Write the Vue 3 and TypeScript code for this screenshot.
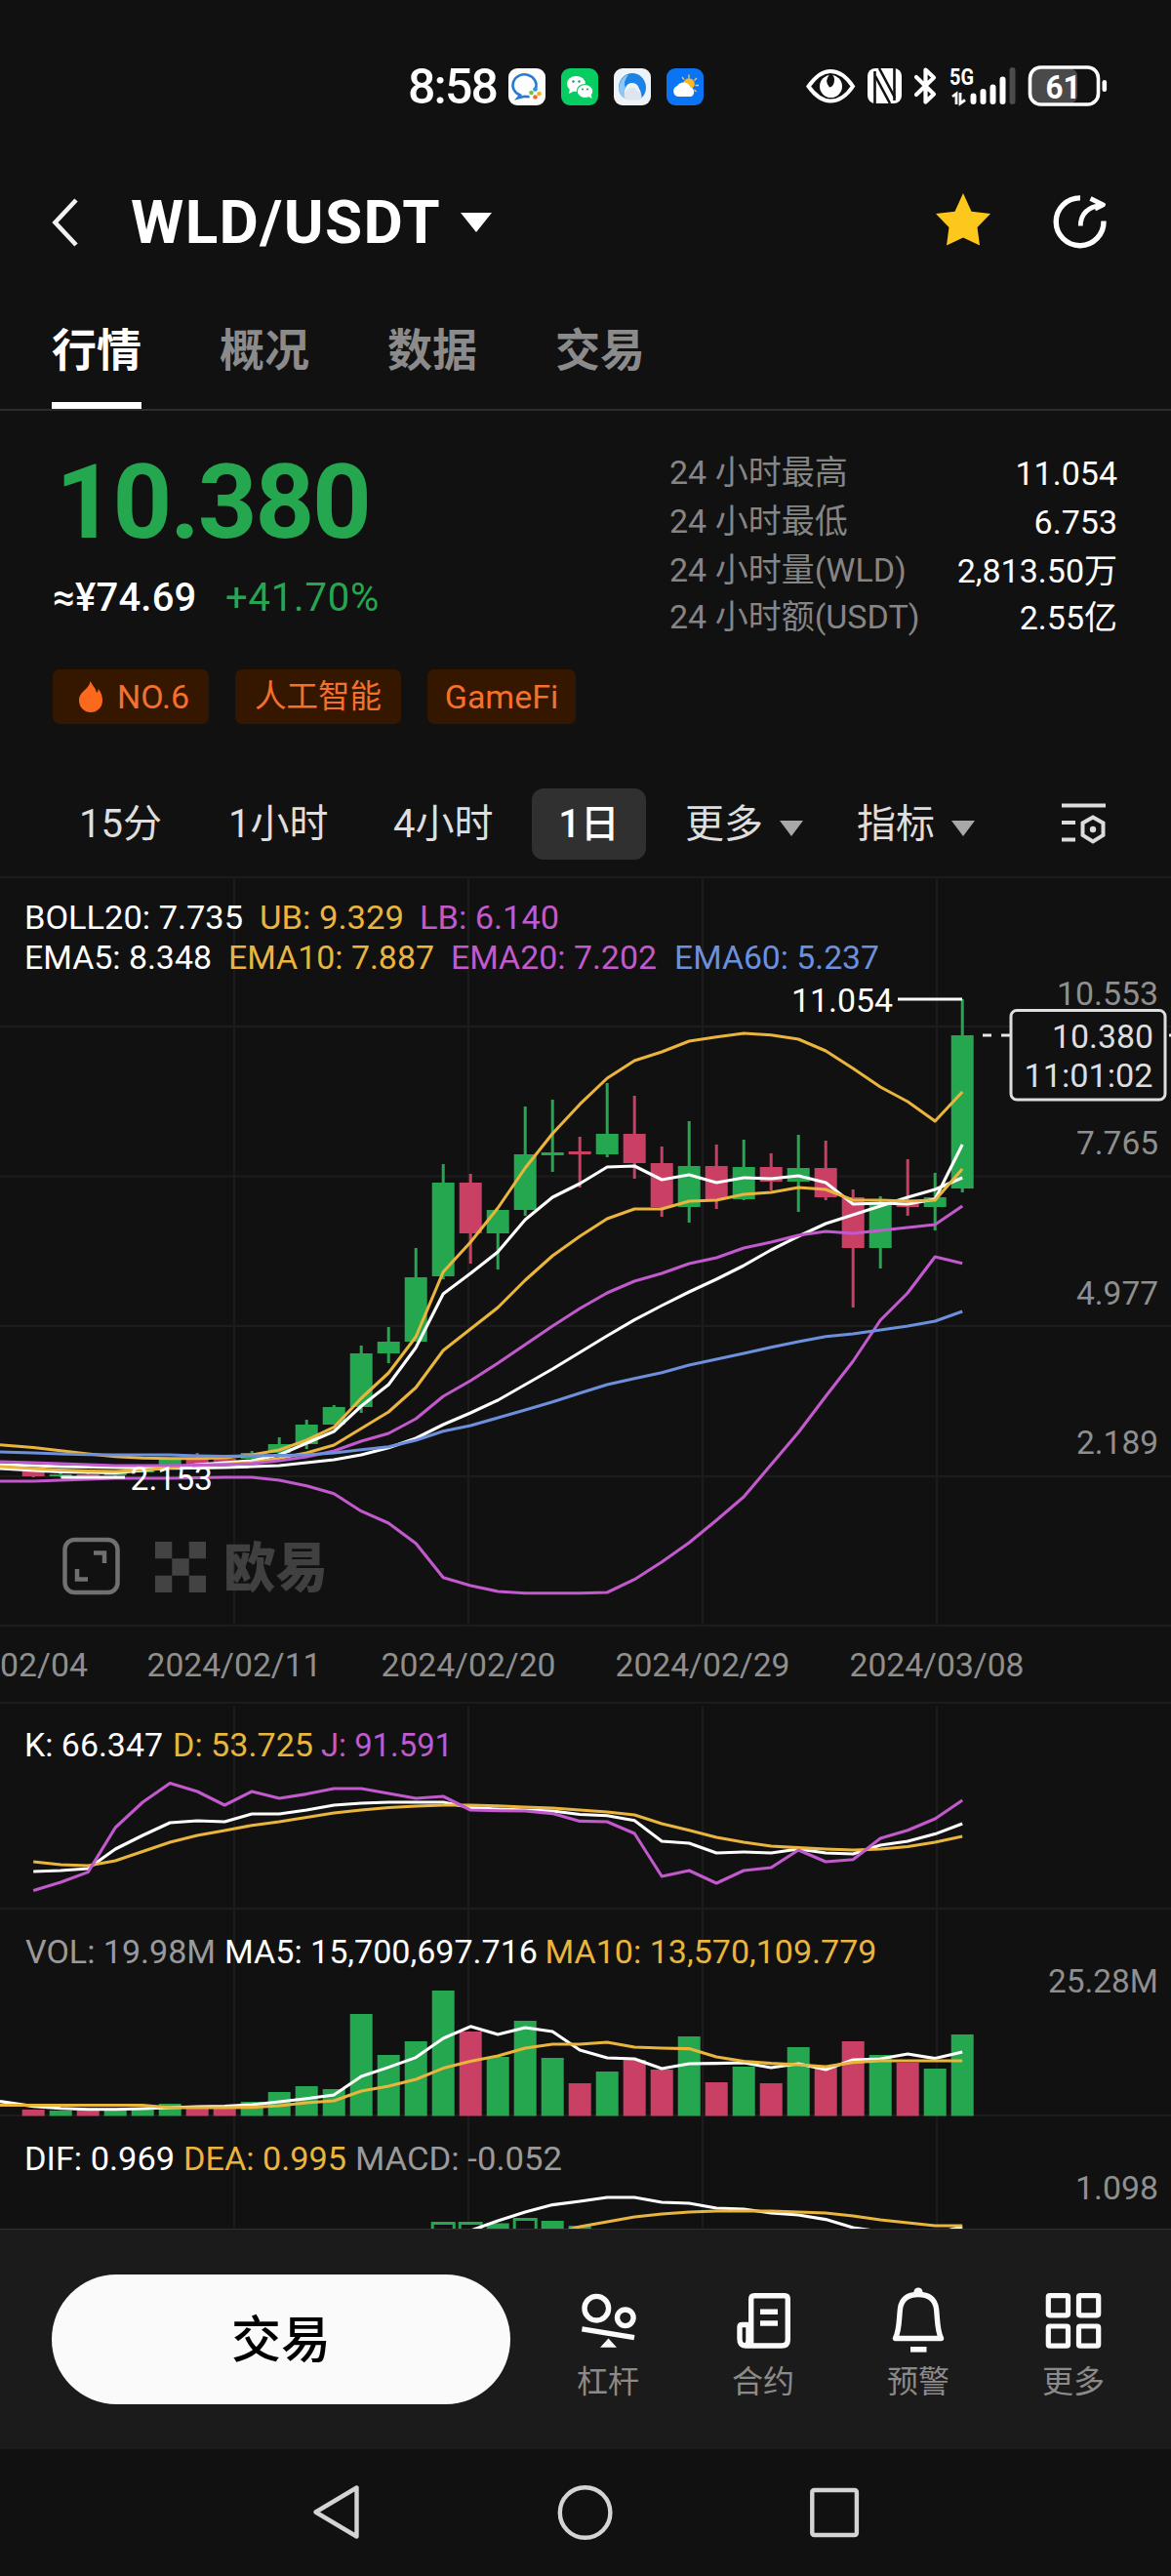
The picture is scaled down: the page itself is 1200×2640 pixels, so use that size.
<script setup lang="ts">
type Candle = [color: 'g' | 'r', high: number, top: number, bottom: number, low: number]
interface Label { t: string; x: number; y: number; w: number; c: string }

const GREEN = '#25a750'
const RED = '#ca3f64'
const YELLOW = '#e9b53d'
const PURPLE = '#c259cd'
const BLUE = '#6d90dc'
const WHITE = '#ffffff'
const GREY = '#8f8f8f'

const X0 = 34.2
const STEP = 28
const xAt = (i: number) => X0 + STEP * i

/** Polyline points for a series whose first value belongs to slot `start`. */
const line = (ys: number[], start = -1) =>
  ys.map((y, k) => `${start + k < 0 ? 0 : xAt(start + k).toFixed(1)},${y}`).join(' ')

const candles: Candle[] = [
  ['r', 1507, 1508, 1513, 1514], ['g', 1510, 1511, 1513, 1514], ['r', 1510, 1511, 1513, 1513],
  ['g', 1507, 1508, 1512, 1513], ['g', 1503, 1504, 1509, 1509], ['g', 1495, 1496, 1504, 1504],
  ['r', 1489, 1496, 1500, 1502], ['r', 1491, 1495, 1498, 1500], ['g', 1487, 1489, 1495, 1496],
  ['g', 1473, 1480, 1489, 1490], ['g', 1455, 1460, 1480, 1485], ['g', 1440, 1442, 1460, 1460],
  ['g', 1379, 1387, 1442, 1448], ['g', 1360, 1375, 1387, 1397], ['g', 1279, 1309, 1375, 1375],
  ['g', 1193, 1212, 1308, 1311], ['r', 1203, 1212, 1264, 1295], ['g', 1240, 1240, 1264, 1301],
  ['g', 1134, 1183, 1240, 1246], ['g', 1127, 1181, 1184, 1201], ['r', 1165, 1180, 1183, 1217],
  ['g', 1110, 1162, 1183, 1186], ['r', 1123, 1162, 1192, 1208], ['r', 1175, 1192, 1237, 1247],
  ['g', 1149, 1195, 1237, 1253], ['r', 1173, 1195, 1229, 1239], ['g', 1168, 1196, 1229, 1230],
  ['r', 1182, 1196, 1211, 1220], ['g', 1163, 1197, 1211, 1242], ['r', 1169, 1197, 1227, 1230],
  ['r', 1219, 1227, 1279, 1340], ['g', 1226, 1234, 1279, 1300], ['r', 1188, 1234, 1237, 1246],
  ['g', 1202, 1227, 1237, 1261], ['g', 1024, 1061, 1218, 1222],
]

const mainLines = [
  { c: WHITE, p: line([1501, 1502, 1503, 1503.5, 1504, 1504.5, 1504.7, 1504.5, 1504, 1503, 1502, 1499, 1496, 1491, 1483.7, 1474, 1460, 1448, 1435, 1419, 1403, 1386, 1369, 1352.7, 1338, 1324, 1311, 1297, 1281, 1267, 1254, 1245, 1236, 1227, 1219, 1207]) },
  { c: YELLOW, p: line([1480.7, 1483.5, 1486.7, 1490, 1492.7, 1494.3, 1494.7, 1494.7, 1494, 1491, 1486, 1476, 1462.7, 1433, 1407, 1370, 1303.5, 1273, 1238, 1197, 1161.7, 1131.7, 1105, 1087, 1078, 1067, 1062.7, 1059, 1060.7, 1065, 1077, 1095, 1114, 1129, 1149, 1119]) },
  { c: PURPLE, p: line([1518, 1518, 1517, 1516, 1515, 1515, 1515, 1514.5, 1514, 1514, 1517, 1522.7, 1530.7, 1548.7, 1561, 1581.7, 1616.7, 1625, 1631, 1632.7, 1632.7, 1632.7, 1632, 1618.7, 1600.7, 1581, 1558, 1534, 1501, 1468, 1431, 1395, 1353, 1325, 1288, 1294.7]) },
  { c: WHITE, p: line([1505, 1507, 1508.5, 1509, 1509.5, 1507, 1504, 1501, 1499, 1497, 1491, 1479, 1467, 1441, 1419, 1381, 1326, 1305, 1283, 1250, 1227, 1213, 1196, 1195, 1209, 1204, 1212, 1207, 1208, 1205, 1212, 1234, 1233, 1234, 1229, 1173]) },
  { c: YELLOW, p: line([1503, 1505, 1506.5, 1507.5, 1508, 1506.5, 1504.5, 1502, 1500.5, 1499, 1494.5, 1489, 1481, 1464, 1447, 1422, 1384, 1362, 1340, 1312, 1287, 1267, 1249, 1239, 1239, 1231, 1230, 1224, 1222, 1217, 1219, 1230, 1230, 1231, 1230, 1198]) },
  { c: PURPLE, p: line([1498, 1499, 1500, 1501, 1502, 1502, 1502, 1501.5, 1501, 1500, 1497, 1493, 1487, 1477, 1469, 1454, 1431, 1415, 1397, 1378, 1359, 1341, 1325, 1313, 1305, 1295, 1289, 1279, 1273, 1266, 1262, 1264, 1261, 1258, 1255, 1236]) },
  { c: BLUE, p: line([1488, 1489, 1490, 1490.7, 1491, 1491, 1491, 1492, 1492.5, 1492, 1491.5, 1491, 1489, 1485.7, 1482.7, 1476, 1466.7, 1461, 1453, 1445, 1436.7, 1427.7, 1419, 1412.7, 1406.7, 1399, 1393, 1387, 1380.7, 1375, 1369.7, 1367, 1363, 1359, 1354, 1344]) },
]

const kdjLines = [
  { c: WHITE, p: line([1918, 1917, 1915, 1895, 1881, 1868, 1866, 1867, 1859, 1859, 1855, 1850, 1848, 1847, 1847, 1847, 1852.5, 1854, 1855, 1856, 1859.5, 1860.7, 1865.7, 1887, 1889, 1899, 1898, 1899, 1895, 1899, 1900, 1891, 1887, 1879.6, 1869], 0) },
  { c: YELLOW, p: line([1908, 1911, 1912, 1907, 1897.5, 1888, 1881, 1876, 1870.7, 1867, 1862.5, 1858, 1855, 1852.5, 1851, 1850, 1850, 1850.7, 1852, 1853, 1855, 1857, 1860, 1869, 1875.7, 1883, 1888, 1892, 1893.6, 1895, 1896, 1895, 1892.5, 1888, 1882], 0) },
  { c: PURPLE, p: line([1937.5, 1929, 1918.6, 1873, 1847, 1827.5, 1836, 1850, 1836, 1843, 1838.6, 1833, 1833, 1838, 1843, 1841, 1855, 1855.7, 1856, 1858.6, 1866.4, 1867, 1879, 1923, 1917, 1930, 1917, 1914, 1896, 1908, 1905.7, 1884, 1875.7, 1864, 1845], 0) },
]

const volumeTops = [2162, 2163, 2163, 2163, 2160, 2156, 2161, 2161, 2154, 2144, 2138, 2141, 2064, 2106, 2092, 2040, 2082, 2108, 2071, 2109, 2135, 2123, 2111, 2121, 2087, 2134, 2118, 2135, 2098, 2118.6, 2092, 2106, 2114, 2120, 2085]
const VOLUME_BASE = 2168.5
const volLines = [
  { c: WHITE, p: line([2153.6, 2158.6, 2160.7, 2161.8, 2161.8, 2161, 2160, 2159, 2158.6, 2157, 2154, 2150.7, 2147, 2128, 2118.6, 2108.6, 2089, 2076.8, 2085, 2078, 2082, 2101, 2109, 2110, 2120, 2115, 2114.6, 2114, 2119, 2115, 2121, 2111, 2110, 2105, 2109.6, 2103]) },
  { c: YELLOW, p: line([2157.5, 2157.5, 2157.5, 2157.5, 2157.5, 2157.5, 2160, 2160, 2160, 2159.6, 2158, 2155, 2153, 2143, 2138, 2131, 2119.6, 2112.5, 2107, 2099, 2095, 2095, 2093, 2098, 2099, 2099.6, 2108, 2112.5, 2114.6, 2116, 2118, 2113.6, 2112, 2112, 2112, 2112]) },
]

const macdLines = [
  { c: WHITE, p: line([2286, 2276, 2267, 2259.6, 2256, 2252, 2252, 2257, 2258, 2263, 2264, 2268, 2270, 2274.6, 2283, 2287, 2290, 2289, 2282], 16) },
  { c: YELLOW, p: line([2290, 2282, 2277, 2272, 2269, 2267, 2266, 2266, 2266, 2267, 2268, 2271, 2275, 2278, 2281, 2281], 19) },
]
const macdBars = [
  { i: 15, y: 2277, hollow: true }, { i: 16, y: 2277, hollow: true }, { i: 17, y: 2278.5, hollow: false },
  { i: 18, y: 2273, hollow: true }, { i: 19, y: 2276, hollow: false }, { i: 20, y: 2281, hollow: false },
]

const mainLabels: Label[] = [
  { t: 'BOLL20: 7.735', x: 25, y: 952, w: 224, c: WHITE },
  { t: 'UB: 9.329', x: 266, y: 952, w: 148, c: YELLOW },
  { t: 'LB: 6.140', x: 430, y: 952, w: 143, c: PURPLE },
  { t: 'EMA5: 8.348', x: 25, y: 993, w: 192, c: WHITE },
  { t: 'EMA10: 7.887', x: 234, y: 993, w: 211, c: YELLOW },
  { t: 'EMA20: 7.202', x: 462, y: 993, w: 211, c: PURPLE },
  { t: 'EMA60: 5.237', x: 691, y: 993, w: 210, c: BLUE },
  { t: '11.054', x: 811, y: 1036.7, w: 104, c: WHITE },
  { t: '2.153', x: 133.5, y: 1527, w: 84.5, c: WHITE },
  { t: '10.553', x: 1083, y: 1030, w: 104, c: GREY },
  { t: '7.765', x: 1103, y: 1183, w: 84, c: GREY },
  { t: '4.977', x: 1103, y: 1336.7, w: 84, c: GREY },
  { t: '2.189', x: 1103, y: 1490, w: 84, c: GREY },
  { t: '02/04', x: 0, y: 1717.7, w: 90, c: GREY },
  { t: '2024/02/11', x: 150.5, y: 1717.7, w: 179, c: GREY },
  { t: '2024/02/20', x: 390.5, y: 1717.7, w: 179, c: GREY },
  { t: '2024/02/29', x: 630.5, y: 1717.7, w: 179, c: GREY },
  { t: '2024/03/08', x: 870.5, y: 1717.7, w: 179, c: GREY },
]
const kdjLabels: Label[] = [
  { t: 'K: 66.347', x: 25, y: 1800, w: 142, c: WHITE },
  { t: 'D: 53.725', x: 177, y: 1800, w: 144, c: YELLOW },
  { t: 'J: 91.591', x: 329, y: 1800, w: 135, c: PURPLE },
]
const volLabels: Label[] = [
  { t: 'VOL: 19.98M', x: 26, y: 2012, w: 195, c: '#9a9a9a' },
  { t: 'MA5: 15,700,697.716', x: 230, y: 2012, w: 321, c: WHITE },
  { t: 'MA10: 13,570,109.779', x: 558.5, y: 2012, w: 340, c: YELLOW },
  { t: '25.28M', x: 1074, y: 2042, w: 113, c: GREY },
]
const macdLabels: Label[] = [
  { t: 'DIF: 0.969', x: 25, y: 2223.6, w: 154, c: WHITE },
  { t: 'DEA: 0.995', x: 188, y: 2223.6, w: 167, c: YELLOW },
  { t: 'MACD: -0.052', x: 364, y: 2223.6, w: 212, c: '#9a9a9a' },
  { t: '1.098', x: 1102, y: 2253.6, w: 85, c: GREY },
]

const tabs = ['行情', '概况', '数据', '交易']
const stats = [
  ['24 小时最高', '11.054'],
  ['24 小时最低', '6.753'],
  ['24 小时量(WLD)', '2,813.50万'],
  ['24 小时额(USDT)', '2.55亿'],
]
const gridX = [240, 480, 720, 960]
</script>

<template>
  <div class="screen">
    <div class="status">
      <div class="status-left">
        <span class="clock">8:58</span>
        <svg class="app-ic" viewBox="0 0 38 38">
          <rect width="38" height="38" rx="9" fill="#fdfdfd" />
          <path d="M28 20.5A12 11 0 1 0 12 27.5L9.5 30.5L16.5 28.8Q20 29.5 21.5 28.8" fill="none" stroke="#2a7bd0" stroke-width="2.6" />
          <circle cx="27.5" cy="21.5" r="2.3" fill="#1b9ae0" /><circle cx="31.5" cy="26" r="2.3" fill="#f6b21b" />
          <circle cx="23.5" cy="25" r="2.3" fill="#6cc644" /><circle cx="27.5" cy="29.5" r="2.3" fill="#ef6a32" />
        </svg>
        <svg class="app-ic" viewBox="0 0 38 38">
          <rect width="38" height="38" rx="9" fill="#07cc62" />
          <ellipse cx="15.5" cy="16" rx="9.5" ry="8" fill="#fff" /><path d="M9 21l-1 5 5-2.5z" fill="#fff" />
          <ellipse cx="24.5" cy="23.5" rx="8.3" ry="7" fill="#fff" stroke="#07cc62" stroke-width="1.2" /><path d="M28 29l3.500 2-.5-4z" fill="#fff" />
          <g fill="#07a850"><circle cx="12.500" cy="13.500" r="1.200" /><circle cx="18.500" cy="13.500" r="1.200" /><circle cx="22" cy="21.500" r="1" /><circle cx="27" cy="21.500" r="1" /></g>
        </svg>
        <svg class="app-ic" viewBox="0 0 38 38">
          <rect width="38" height="38" rx="9" fill="#eef3f8" />
          <path d="M5 21A14 15 0 0 1 33 19C33 26 30 30 26.500 31A9 9 0 0 0 26 21A7.500 8.500 0 0 0 12 20C10 23 9.500 27 12 31Q6 28 5 21Z" fill="#1c83e6" />
          <path d="M5 22A13 15 0 0 1 15 6.500Q9 14 12 20Q9.500 26 12 31Q6 29 5 22Z" fill="#8cc7f6" />
          <path d="M14 32.500a5.500 5.500 0 0 1 0-10a5.800 5.800 0 0 1 10.500 1.500a4.500 4.500 0 0 1 1.500 8.500z" fill="#dfe5ec" />
        </svg>
        <svg class="app-ic" viewBox="0 0 38 38">
          <rect width="38" height="38" rx="9" fill="#0b74f5" />
          <g stroke="#f9c74a" stroke-width="1.300"><path d="M23 6.500v4M31 10l-2.500 2.500M33 17.500h-3.500M16 9l2 2.500M30.500 24l-2-2" /></g>
          <circle cx="23" cy="16" r="5.800" fill="#f9b91f" />
          <path d="M12 29a5.700 5.700 0 0 1-1-11a7.500 7.500 0 0 1 13.500 1.500a5 5 0 0 1 .5 9.500z" fill="#fff" />
        </svg>
      </div>
      <svg class="status-right" viewBox="820 60 320 56">
        <path d="M828.500 88.500C836 78 843 73 851 73S867 78 874 88.500C867 99 859 103.500 851 103.500S836 99 828.500 88.500Z" fill="none" stroke="#fff" stroke-width="4" />
        <circle cx="851.500" cy="88.500" r="11.500" fill="#fff" /><path d="M851 75.500q-7 7-1 14q5-1 5-8q0-4-4-6z" fill="#111" />
        <rect x="889" y="70" width="35" height="36" rx="8" fill="#fff" />
        <g fill="none" stroke="#111" stroke-width="2.600"><path d="M896.500 106V73M901 70L917 100" /><path d="M916.500 70V103M912 106L897 78" /></g>
        <path d="M939 79L957 96.500L948.500 104.500V71.500L957 79.500L939 97" fill="none" stroke="#fff" stroke-width="4.200" stroke-linejoin="round" stroke-linecap="round" />
        <text x="973" y="87" class="g5" textLength="25" lengthAdjust="spacingAndGlyphs">5G</text>
        <path d="M976 99l4-3v11M984 95v11l5-3.500" fill="none" stroke="#fff" stroke-width="2.800" />
        <g stroke-width="6" stroke-linecap="round" stroke="#fff">
          <path d="M997.500 98.500v5.500M1007.500 94v10M1017.500 89.500v14.500M1027.500 81.500v22.500" /><path d="M1037.500 72v32" stroke="#4c4c4c" />
        </g>
        <rect x="1057" y="70.500" width="47" height="35" rx="7" fill="#4a4a4a" />
        <rect x="1055.500" y="69" width="70" height="38" rx="11" fill="none" stroke="#fff" stroke-width="3.600" />
        <rect x="1129.500" y="82" width="4.600" height="12" rx="2.300" fill="#fff" />
        <text x="1071.500" y="100.500" class="bat" textLength="36" lengthAdjust="spacingAndGlyphs">61</text>
      </svg>
    </div>

    <header class="head">
      <svg class="back" viewBox="0 0 30 54"><path d="M26 4L4.500 27L26 50" fill="none" stroke="#f2f2f2" stroke-width="4.600" /></svg>
      <h1 class="pair">WLD/USDT</h1>
      <svg class="caret" viewBox="0 0 32 20"><path d="M0 0H32L16 20Z" fill="#fff" /></svg>
      <svg class="head-icons" viewBox="950 188 200 80">
        <path d="M987 198L995.500 216.700L1015 219L1001.500 233L1004 251.500L987 243.500L970 251.500L972.500 233L959 219L978.500 216.700Z" fill="#fcc81b" />
        <g fill="none" stroke="#fff" stroke-width="5.400" stroke-linecap="butt" stroke-linejoin="round">
          <path d="M1107 202.900A24.400 24.400 0 1 0 1131 226.500" />
          <path d="M1107.300 231.500C1107.300 219 1115 212 1129.500 210.200M1117.500 203.500L1130.500 209.800L1122 214" stroke-width="4.800" />
        </g>
      </svg>
    </header>

    <nav class="tabs">
      <span v-for="(t, i) in tabs" :key="t" class="tab" :class="{ on: i === 0 }">{{ t }}</span>
    </nav>

    <section class="info">
      <div class="left">
        <div class="price">10.380</div>
        <div class="sub"><span class="cny">≈¥74.69</span><span class="chg">+41.70%</span></div>
        <div class="tags">
          <span class="tag t1">
            <svg viewBox="0 0 24 32"><path d="M11.500 0C14 5 17 7 18 12C19.500 11 20 9 19.500 7.500C23 12 24 16 24 20A12 12 0 0 1 0 20C0 14 3 12 6 9C9 6 11 4 11.500 0Z" fill="#fb6a1c" /></svg>
            NO.6
          </span>
          <span class="tag t2">人工智能</span>
          <span class="tag t3">GameFi</span>
        </div>
      </div>
      <div class="stats">
        <div v-for="s in stats" :key="s[0]" class="stat"><span>{{ s[0] }}</span><b>{{ s[1] }}</b></div>
      </div>
    </section>

    <div class="periods">
      <span>15分</span>
      <span>1小时</span>
      <span>4小时</span>
      <span class="active">1日</span>
      <span>更多<i></i></span>
      <span>指标<i></i></span>
      <svg class="settings" viewBox="0 0 45 43">
        <g fill="none" stroke="#dcdcdc" stroke-width="4"><path d="M0 2.500H45M0 20H14M0 37.500H14" /><path d="M32 14.500L42.500 20.500V33L32 39.500L21.500 33V20.500Z" /></g>
        <circle cx="32" cy="27" r="3.200" fill="#dcdcdc" />
      </svg>
    </div>

    <svg class="panel" width="1200" height="846" viewBox="0 898 1200 846">
      <g class="grid">
        <path d="M0 899H1200M0 1052H1200M0 1205.500H1200M0 1359H1200M0 1513H1200M0 1666H1200" />
        <path v-for="x in gridX" :key="x" :d="`M${x} 898V1666`" />
      </g>
      <g>
        <rect x="66.500" y="1578" width="54" height="54" rx="10" fill="none" stroke="#707070" stroke-width="4.500" />
        <path d="M96 1591.500H107V1602M79 1608V1618.500H90" fill="none" stroke="#707070" stroke-width="4.500" />
        <path d="M159 1580h17.300v17.300h-17.300zM193.700 1580h17.300v17.300h-17.300zM176.300 1597.300h17.400v17.400h-17.400zM159 1614.700h17.300v17.300h-17.300zM193.700 1614.700h17.300v17.300h-17.300z" fill="#434343" />
        <text x="229" y="1626" class="brand" textLength="107" lengthAdjust="spacingAndGlyphs">欧易</text>
      </g>
      <g v-for="(c, i) in candles" :key="i" :fill="c[0] === 'g' ? GREEN : RED">
        <rect :x="xAt(i) - 1.5" :y="c[1]" width="3" :height="c[4] - c[1]" />
        <rect :x="xAt(i) - 11.5" :y="c[2]" width="23" :height="c[3] - c[2]" />
      </g>
      <polyline v-for="(l, i) in mainLines" :key="i" class="ln" :points="l.p" :stroke="l.c" />
      <path d="M920 1024H986M62.500 1514H128" stroke="#fff" stroke-width="3" />
      <path d="M1007 1061H1016M1026 1061H1035M1198 1061H1200" stroke="#e8e8e8" stroke-width="3" />
      <text v-for="l in mainLabels" :key="l.t" class="lb" :x="l.x" :y="l.y" :fill="l.c" :textLength="l.w" lengthAdjust="spacingAndGlyphs">{{ l.t }}</text>
      <rect x="1036" y="1035.500" width="158" height="91.500" rx="6" fill="#111" stroke="#dedede" stroke-width="3" />
      <text class="lb" x="1078" y="1074" fill="#dedede" textLength="104" lengthAdjust="spacingAndGlyphs">10.380</text>
      <text class="lb" x="1049.500" y="1114" fill="#dedede" textLength="132" lengthAdjust="spacingAndGlyphs">11:01:02</text>
    </svg>

    <svg class="panel" width="1200" height="213" viewBox="0 1744 1200 213">
      <g class="grid"><path d="M0 1745H1200M0 1956H1200" /><path v-for="x in gridX" :key="x" :d="`M${x} 1748V1957`" /></g>
      <polyline v-for="(l, i) in kdjLines" :key="i" class="ln" :points="l.p" :stroke="l.c" />
      <text v-for="l in kdjLabels" :key="l.t" class="lb" :x="l.x" :y="l.y" :fill="l.c" :textLength="l.w" lengthAdjust="spacingAndGlyphs">{{ l.t }}</text>
    </svg>

    <svg class="panel" width="1200" height="212" viewBox="0 1957 1200 212">
      <g class="grid"><path d="M0 2168H1200" /><path v-for="x in gridX" :key="x" :d="`M${x} 1957V2169`" /></g>
      <rect v-for="(y, i) in volumeTops" :key="i" :x="xAt(i) - 11.5" :y="y" width="23" :height="VOLUME_BASE - y" :fill="candles[i][0] === 'g' ? GREEN : RED" />
      <polyline v-for="(l, i) in volLines" :key="i" class="ln" :points="l.p" :stroke="l.c" />
      <text v-for="l in volLabels" :key="l.t" class="lb" :x="l.x" :y="l.y" :fill="l.c" :textLength="l.w" lengthAdjust="spacingAndGlyphs">{{ l.t }}</text>
    </svg>

    <svg class="panel" width="1200" height="115" viewBox="0 2169 1200 115">
      <g class="grid"><path v-for="x in gridX" :key="x" :d="`M${x} 2169V2284`" /></g>
      <rect
        v-for="b in macdBars" :key="b.i" :x="xAt(b.i) - (b.hollow ? 11 : 11.5)" :y="b.hollow ? b.y + 1.5 : b.y"
        :width="b.hollow ? 22 : 23" height="30" :fill="b.hollow ? '#111' : GREEN" :stroke="b.hollow ? GREEN : 'none'" stroke-width="3"
      />
      <polyline v-for="(l, i) in macdLines" :key="i" class="ln" :points="l.p" :stroke="l.c" />
      <text v-for="l in macdLabels" :key="l.t" class="lb" :x="l.x" :y="l.y" :fill="l.c" :textLength="l.w" lengthAdjust="spacingAndGlyphs">{{ l.t }}</text>
    </svg>

    <footer class="actions">
      <button class="trade">交易</button>
      <div class="act">
        <svg viewBox="0 0 64 80">
          <g fill="none" stroke="#fafafa" stroke-width="5.400"><circle cx="20.300" cy="31.700" r="12.300" /><circle cx="49.800" cy="41.300" r="8.300" /><path d="M5.400 52.800L59 61.700" /></g>
          <path d="M32.500 62.500L41 71.700H24Z" fill="#fafafa" />
        </svg>
        <span>杠杆</span>
      </div>
      <div class="act">
        <svg viewBox="0 0 64 80">
          <g fill="none" stroke="#fafafa" stroke-width="5.400" stroke-linejoin="round"><path d="M19.700 70V22Q19.700 18.700 23 18.700H54Q57.300 18.700 57.300 22V64Q57.300 70 51 70H14Q8 70 8 63V51Q8 48.500 10.500 48.500H17M17 49V64Q17 69 14 70" /></g>
          <path d="M29 35.300H47M29 47H47" stroke="#fafafa" stroke-width="5.400" />
        </svg>
        <span>合约</span>
      </div>
      <div class="act">
        <svg viewBox="0 0 64 80">
          <path d="M8.500 62.500H55.500C51 53 52 44 50.500 32C49 21 41 17.500 32 17.500S15 21 13.500 32C12 44 13 53 8.500 62.500Z" fill="none" stroke="#fafafa" stroke-width="5.400" stroke-linejoin="round" />
          <circle cx="32" cy="15" r="4.600" fill="#fafafa" /><rect x="24" y="71" width="16.500" height="5.600" fill="#fafafa" />
        </svg>
        <span>预警</span>
      </div>
      <div class="act">
        <svg viewBox="0 0 64 80">
          <g fill="none" stroke="#fafafa" stroke-width="5.200"><rect x="6.300" y="18.600" width="20.200" height="20.200" rx="1.500" /><rect x="37.500" y="18.600" width="20.200" height="20.200" rx="1.500" /><rect x="6.300" y="50" width="20.200" height="20.200" rx="1.500" /><rect x="37.500" y="50" width="20.200" height="20.200" rx="1.500" /></g>
        </svg>
        <span>更多</span>
      </div>
    </footer>

    <div class="sysnav">
      <svg width="1200" height="130" viewBox="0 2510 1200 130">
        <g fill="none" stroke="#d4d4d4" stroke-width="4.400" stroke-linejoin="round">
          <path d="M365.500 2549.500V2599.500L323.500 2574.500Z" /><circle cx="599.600" cy="2575" r="25.800" /><rect x="832.300" y="2552" width="45.600" height="46" rx="2" />
        </g>
      </svg>
    </div>
  </div>
</template>

<style>
html, body { margin: 0; background: #111; }
</style>

<style scoped>
.screen {
  width: 1200px;
  height: 2640px;
  overflow: hidden;
  background: #111;
  color: #fff;
  font-family: Roboto, "Noto Sans CJK SC", sans-serif;
}
.screen svg { display: block; flex: none; }

.status { height: 178px; box-sizing: border-box; display: flex; align-items: center; justify-content: space-between; padding: 0 60px 0 418px; }
.status-left { display: flex; align-items: center; }
.clock { width: 103px; font-size: 50px; line-height: 60px; font-weight: 500; letter-spacing: -1.8px; }
.app-ic { width: 38px; height: 38px; margin-right: 16px; }
.status-right { width: 320px; height: 56px; margin-bottom: 2px; }
.g5 { font-size: 24px; font-weight: 700; fill: #fff; }
.bat { font-size: 34px; font-weight: 700; fill: #fff; }

.head { height: 100px; display: flex; align-items: center; padding: 0 50px 0 52px; }
.back { width: 30px; height: 54px; }
.pair { margin: 0 0 0 52px; width: 338px; font-size: 62px; line-height: 72px; font-weight: 700; letter-spacing: 1.4px; white-space: nowrap; }
.caret { width: 32px; height: 20px; }
.head-icons { width: 200px; height: 80px; margin-left: auto; }

.tabs { height: 141px; border-bottom: 2px solid #2c2c2c; display: flex; gap: 80px; padding-left: 53px; }
.tab { position: relative; padding-top: 51px; font-size: 46px; line-height: 60px; font-weight: 700; color: #8b8b8b; }
.tab.on { color: #fff; }
.tab.on::after { content: ""; position: absolute; left: 0; right: 0; bottom: 0; height: 7px; background: #fff; }

.info { display: flex; justify-content: space-between; padding: 0 55px 0 54px; height: 321px; }
.left { padding-top: 44px; }
.price { margin-left: 3px; font-size: 106px; line-height: 100px; font-weight: 700; color: #25a750; letter-spacing: -2.2px; }
.sub { margin-top: 23px; display: flex; font-size: 40px; line-height: 50px; }
.cny { width: 177px; font-weight: 500; letter-spacing: 0.2px; }
.chg { color: #25a750; letter-spacing: 0.8px; }
.tags { margin-top: 48px; display: flex; }
.tag { box-sizing: border-box; height: 56px; border-radius: 7px; background: #351700; color: #f4702d; font-size: 34px; line-height: 57px; display: flex; align-items: center; justify-content: center; }
.tag svg { width: 24px; height: 32px; margin-right: 15px; }
.t1 { width: 160px; padding-left: 7px; }
.t2 { width: 170px; margin-left: 27px; font-size: 32.5px; }
.t3 { width: 152px; margin-left: 27px; }
.stats { width: 459px; padding-top: 39px; }
.stat { height: 50px; display: flex; justify-content: space-between; align-items: center; font-size: 34px; line-height: 50px; white-space: nowrap; color: #858585; }
.stat:last-child { height: 46px; }
.stat span { padding-bottom: 2px; }
.stat b { font-weight: 400; color: #fff; }

.periods { box-sizing: border-box; height: 156px; padding: 66px 0 17px 81px; display: grid; grid-template-columns: 153px 169px 142px 157px 176px 210px 45px; align-items: center; font-size: 40px; line-height: 73px; color: #dedede; white-space: nowrap; }
.periods span { display: flex; align-items: center; }
.periods .active { width: 117px; justify-content: center; border-radius: 12px; background: #303030; color: #fff; font-weight: 500; }
.periods i { margin: 9px 0 0 17px; border: 12px solid transparent; border-top: 16px solid #a8a8a8; border-bottom: 0; }
.settings { width: 45px; height: 43px; }

.grid path { stroke: #1c1c1c; stroke-width: 2; fill: none; }
.ln { fill: none; stroke-width: 3.1; stroke-linejoin: round; }
.lb { font-size: 34px; white-space: pre; }
.brand { font-family: "Noto Sans CJK SC", sans-serif; font-weight: 900; font-size: 55px; fill: #404040; }

.actions { box-sizing: border-box; height: 226px; border-top: 1px solid #303030; background: #1b1b1b; display: flex; padding-left: 53px; }
.trade { margin: 46px 20.500px 0 0; width: 470px; height: 133px; border: 0; padding: 0 0 7px; border-radius: 67px; background: #fafafa; color: #000; font: 500 51px Roboto, "Noto Sans CJK SC", sans-serif; }
.act { width: 159px; padding-top: 49px; display: flex; flex-direction: column; align-items: center; font-size: 32px; line-height: 44px; color: #8a8a8a; }
.act svg { width: 64px; height: 80px; margin-bottom: 5px; }
.sysnav { height: 130px; }
</style>
